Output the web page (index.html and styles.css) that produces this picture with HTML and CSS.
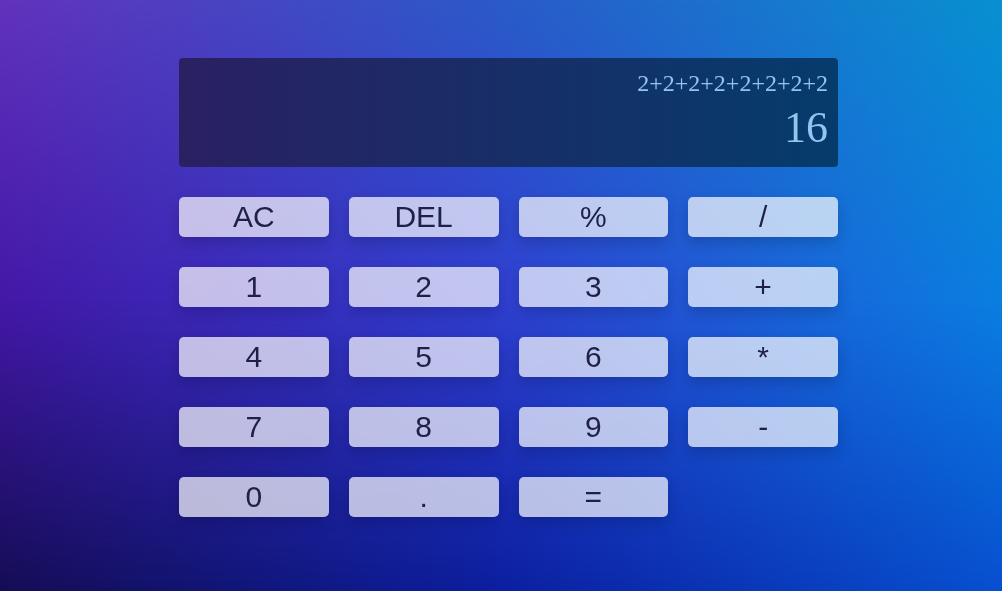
FILE: index.html
```html
<!DOCTYPE html>
<html lang="en">
<head>
<meta charset="utf-8">
<title>Calculator</title>
<link rel="stylesheet" href="styles.css">
</head>
<body>
<div class="calculator">
  <div class="display">
    <div class="expression">2+2+2+2+2+2+2+2</div>
    <div class="result">16</div>
  </div>
  <div class="keys">
    <button class="key">AC</button>
    <button class="key">DEL</button>
    <button class="key">%</button>
    <button class="key">/</button>
    <button class="key">1</button>
    <button class="key">2</button>
    <button class="key">3</button>
    <button class="key">+</button>
    <button class="key">4</button>
    <button class="key">5</button>
    <button class="key">6</button>
    <button class="key">*</button>
    <button class="key">7</button>
    <button class="key">8</button>
    <button class="key">9</button>
    <button class="key">-</button>
    <button class="key">0</button>
    <button class="key">.</button>
    <button class="key">=</button>
  </div>
</div>
</body>
</html>
```
FILE: styles.css
```css
html, body {
  margin: 0;
  height: 100%;
}
body {
  background: linear-gradient(to right, #150d55 0%, #0c1fa0 50%, #0850d0 100%);
  display: flex;
  justify-content: center;
  align-items: flex-start;
  padding-left: 15px;
  box-sizing: border-box;
  overflow: hidden;
  font-family: "Liberation Sans", Arial, sans-serif;
}
body::before,
body::after {
  content: "";
  position: fixed;
  inset: 0;
  z-index: -1;
}
body::before {
  background: linear-gradient(to right, #4418a8 0%, #3040d0 50%, #0a7fe0 100%);
  -webkit-mask-image: linear-gradient(to bottom, #000 0%, #000 50%, transparent 100%);
  mask-image: linear-gradient(to bottom, #000 0%, #000 50%, transparent 100%);
}
body::after {
  background: linear-gradient(to right, #6232bc 0%, #2a5ac8 50%, #0890d0 100%);
  -webkit-mask-image: linear-gradient(to bottom, #000 0%, transparent 50%);
  mask-image: linear-gradient(to bottom, #000 0%, transparent 50%);
}
.calculator {
  width: 659px;
  margin-top: 58px;
}
.display {
  height: 109px;
  box-sizing: border-box;
  border-radius: 4px;
  background: linear-gradient(to right, #2a2062, #053c6c);
  padding: 8px 10px 0 10px;
  display: flex;
  flex-direction: column;
  align-items: flex-end;
  font-family: "Liberation Serif", "Times New Roman", serif;
  color: #92c4ee;
}
.expression {
  font-size: 24px;
  line-height: 34px;
}
.result {
  font-size: 44px;
  line-height: 56px;
  color: #92c6ef;
}
.keys {
  margin-top: 30px;
  display: grid;
  grid-template-columns: repeat(4, 1fr);
  column-gap: 20px;
  row-gap: 30px;
}
.key {
  height: 40px;
  border: none;
  border-radius: 5px;
  background: rgba(255, 255, 255, 0.7);
  color: #1e2048;
  font-family: "Liberation Sans", Arial, sans-serif;
  font-size: 30px;
  padding: 0;
  box-shadow: 0 6px 14px rgba(0, 0, 30, 0.18);
}
```
